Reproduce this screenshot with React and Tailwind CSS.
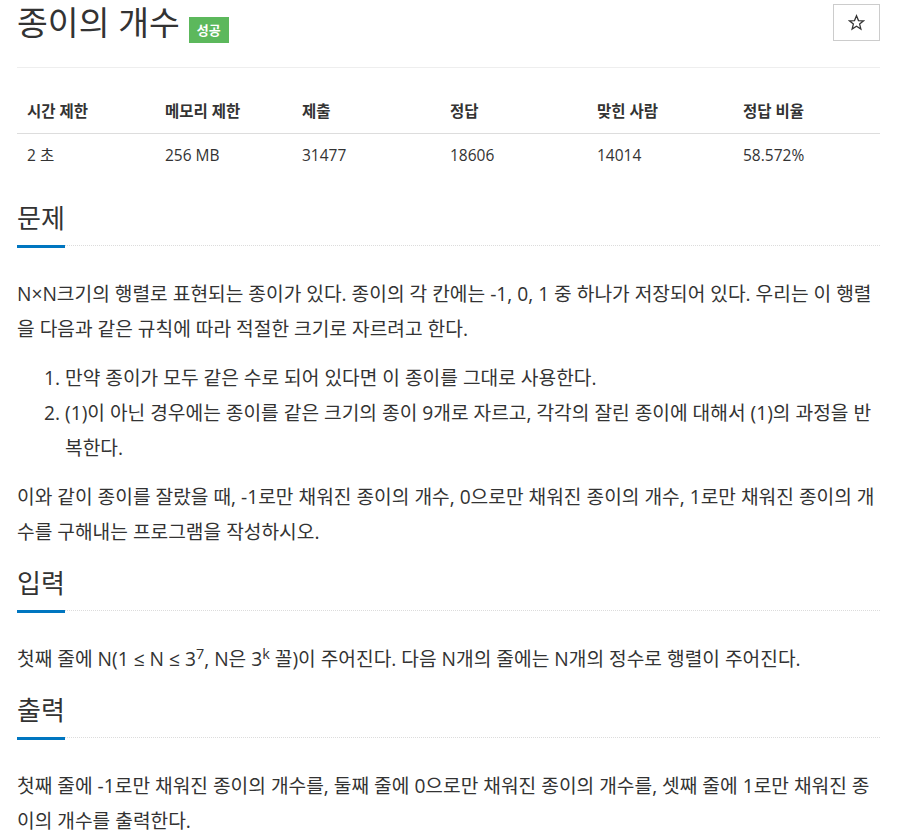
import React from "react";

const font = { fontFamily: '"Open Sans", "Noto Sans CJK KR", sans-serif' };

function SectionHead({ title }) {
  return (
    <div className="border-b border-dotted border-[#dcdcdc]">
      <h2 className="inline-block text-[26px] leading-[34px] pb-[10px] border-b-[3px] border-[#0076c0] mb-[-3px] text-[#333] font-normal">
        {title}
      </h2>
    </div>
  );
}

export default function App() {
  const heads = ["시간 제한", "메모리 제한", "제출", "정답", "맞힌 사람", "정답 비율"];
  const vals = ["2 초", "256 MB", "31477", "18606", "14014", "58.572%"];
  const widths = ["w-[138px]", "w-[137px]", "w-[148px]", "w-[147px]", "w-[146px]", "w-[147px]"];
  return (
    <div
      className="w-[898px] min-h-[832px] bg-white pl-[17px] pr-[18px] text-[#333]"
      style={font}
    >
      {/* header */}
      <div className="h-[68px] border-b border-[#eee] flex justify-between items-start">
        <div className="flex items-start">
          <h1 className="text-[33.5px] leading-[44px] font-normal text-[#333]">종이의 개수</h1>
          <span className="ml-[9px] mt-[17px] h-[26px] px-[8px] bg-[#5cb85c] text-white text-[13px] font-bold leading-[26px]">
            성공
          </span>
        </div>
        <button className="mt-[4px] w-[47px] h-[37px] border border-[#ccc] bg-white flex items-center justify-center">
          <svg width="17" height="17" viewBox="0 0 24 24" fill="none" stroke="#333" strokeWidth="1.8" strokeLinejoin="miter">
            <polygon points="12,2.5 14.8,9.2 22,9.6 16.4,14.2 18.2,21.3 12,17.4 5.8,21.3 7.6,14.2 2,9.6 9.2,9.2" />
          </svg>
        </button>
      </div>

      {/* table */}
      <table className="mt-[21px] w-full border-collapse text-[15.5px]">
        <thead>
          <tr>
            {heads.map((h, i) => (
              <th
                key={i}
                className={`${widths[i]} text-left font-bold px-[10px] py-[12px] leading-[20px] border-b border-[#ddd]`}
              >
                {h}
              </th>
            ))}
          </tr>
        </thead>
        <tbody>
          <tr>
            {vals.map((v, i) => (
              <td key={i} className="text-left px-[10px] py-[11px] leading-[20px]">
                {v}
              </td>
            ))}
          </tr>
        </tbody>
      </table>

      {/* 문제 */}
      <section className="mt-[25px]">
        <SectionHead title="문제" />
        <div className="mt-[30px] text-[19.2px] leading-[35px]">
          <p className="mb-[14px]">
            N×N크기의 행렬로 표현되는 종이가 있다. 종이의 각 칸에는 -1, 0, 1 중 하나가 저장되어 있다. 우리는 이 행렬을 다음과 같은 규칙에 따라 적절한 크기로 자르려고 한다.
          </p>
          <ol className="list-decimal pl-[48px] mb-[14px]">
            <li>만약 종이가 모두 같은 수로 되어 있다면 이 종이를 그대로 사용한다.</li>
            <li>
              (1)이 아닌 경우에는 종이를 같은 크기의 종이 9개로 자르고, 각각의 잘린 종이에 대해서 (1)의 과정을 반복한다.
            </li>
          </ol>
          <p>
            이와 같이 종이를 잘랐을 때, -1로만 채워진 종이의 개수, 0으로만 채워진 종이의 개수, 1로만 채워진 종이의 개수를 구해내는 프로그램을 작성하시오.
          </p>
        </div>
      </section>

      {/* 입력 */}
      <section className="mt-[17px]">
        <SectionHead title="입력" />
        <div className="mt-[30px] text-[19.2px] leading-[35px]">
          <p>
            첫째 줄에 N(1 ≤ N ≤ 3<sup>7</sup>, N은 3<sup>k</sup> 꼴)이 주어진다. 다음 N개의 줄에는 N개의 정수로 행렬이 주어진다.
          </p>
        </div>
      </section>

      {/* 출력 */}
      <section className="mt-[17px]">
        <SectionHead title="출력" />
        <div className="mt-[30px] text-[19.2px] leading-[35px]">
          <p>
            첫째 줄에 -1로만 채워진 종이의 개수를, 둘째 줄에 0으로만 채워진 종이의 개수를, 셋째 줄에 1로만 채워진 종이의 개수를 출력한다.
          </p>
        </div>
      </section>
    </div>
  );
}
